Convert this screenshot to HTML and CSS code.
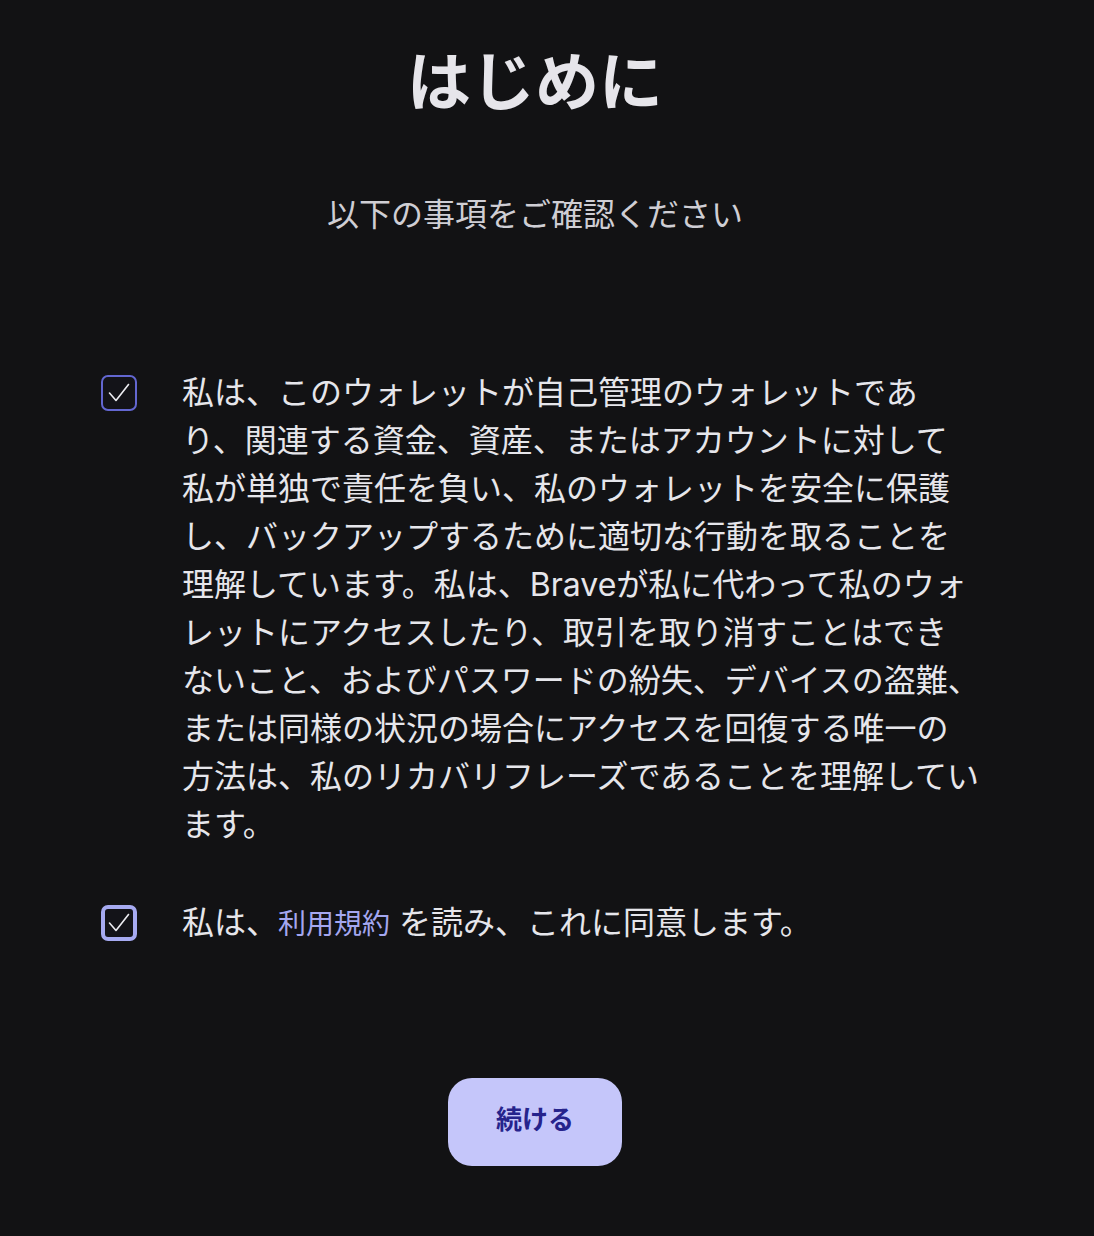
FILE: index.html
```html
<!DOCTYPE html>
<html lang="ja">
<head>
<meta charset="utf-8">
<title>はじめに</title>
<link rel="stylesheet" href="styles.css">
</head>
<body>
<main class="page">
  <h1 class="title">はじめに</h1>
  <p class="subtitle">以下の事項をご確認ください</p>

  <div class="terms">
    <label class="term">
      <span class="box box-checked">
        <svg viewBox="0 0 36 36" width="36" height="36"><polyline points="8.5,18 15,25.5 27.5,9.5" fill="none" stroke="#ececf1" stroke-width="1.6" stroke-linecap="round" stroke-linejoin="round"/></svg>
      </span>
      <span class="term-text">私は、このウォレットが自己管理のウォレットであ<br>り、関連する資金、資産、またはアカウントに対して<br>私が単独で責任を負い、私のウォレットを安全に保護<br>し、バックアップするために適切な行動を取ることを<br>理解しています。私は、Braveが私に代わって私のウォ<br>レットにアクセスしたり、取引を取り消すことはでき<br>ないこと、およびパスワードの紛失、デバイスの盗難、<br>または同様の状況の場合にアクセスを回復する唯一の<br>方法は、私のリカバリフレーズであることを理解してい<br>ます。</span>
    </label>

    <label class="term term-second">
      <span class="box box-focused">
        <svg viewBox="0 0 36 36" width="36" height="36"><polyline points="8.5,18 15,25.5 27.5,9.5" fill="none" stroke="#ececf1" stroke-width="1.6" stroke-linecap="round" stroke-linejoin="round"/></svg>
      </span>
      <span class="term-text">私は、<a class="link" href="#">利用規約</a> を読み、これに同意します。</span>
    </label>
  </div>

  <div class="actions">
    <button class="btn" type="button">続ける</button>
  </div>
</main>
</body>
</html>
```
FILE: styles.css
```css
html, body {
  margin: 0;
  padding: 0;
  background: #121214;
}

body {
  font-family: Inter, "Noto Sans CJK JP", "Noto Sans", sans-serif;
  color: #e6e6eb;
}

.page {
  width: 1070px;
  display: flex;
  flex-direction: column;
  align-items: center;
}

.title {
  margin: 44px 0 0;
  font-size: 64px;
  line-height: 76px;
  font-weight: 700;
  color: #e6e5ea;
}

.subtitle {
  margin: 73px 0 0;
  font-size: 32px;
  line-height: 44px;
  font-weight: 400;
  color: #cfced4;
}

.terms {
  align-self: stretch;
  margin-top: 132px;
  padding-left: 101px;
  display: flex;
  flex-direction: column;
  gap: 50px;
}

.term {
  display: flex;
  align-items: flex-start;
  gap: 45px;
  font-size: 32px;
  line-height: 48px;
  cursor: pointer;
}

.box {
  flex: none;
  width: 36px;
  height: 36px;
  margin-top: 6px;
  box-sizing: border-box;
  border-radius: 7px;
  position: relative;
  background: #131318;
}

.box svg {
  position: absolute;
  left: 0;
  top: 0;
}

.box-checked {
  border: 2px solid #6367d1;
}

.box-checked svg {
  left: -2px;
  top: -2px;
}

.box-focused {
  border: 4px solid #a6aaf1;
}

.box-focused svg {
  left: -4px;
  top: -4px;
}

.term-text {
  width: 840px;
  color: #e6e6eb;
}

.link {
  color: #a4a7f0;
  font-size: 28px;
  text-decoration: none;
}

.actions {
  margin-top: 130px;
}

.btn {
  width: 174px;
  height: 88px;
  padding: 0 0 5px;
  border: none;
  border-radius: 24px;
  background: #c5c6fa;
  color: #26238c;
  font-family: Inter, "Noto Sans CJK JP", sans-serif;
  font-size: 26px;
  line-height: 1;
  font-weight: 700;
  cursor: pointer;
}
```
